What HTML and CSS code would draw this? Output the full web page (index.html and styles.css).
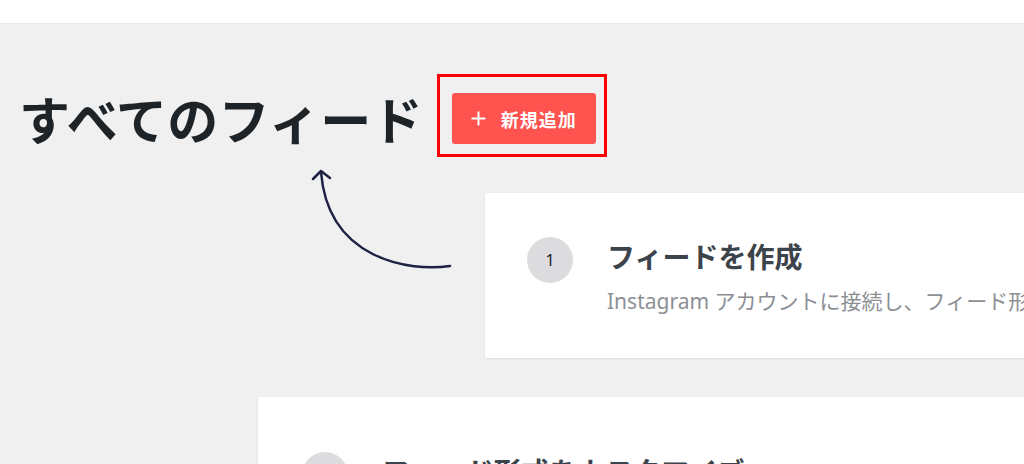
FILE: index.html
```html
<!DOCTYPE html>
<html lang="ja">
<head>
    <meta charset="UTF-8">
    <meta name="viewport" content="width=device-width, initial-scale=1.0">
    <title>すべてのフィード</title>
    <link rel="stylesheet" href="styles.css">
</head>
<body>
    <div class="topbar"></div>

    <div class="page">
        <div class="page-header">
            <h1>すべてのフィード</h1>
            <div class="highlight">
                <button class="add-new">
                    <svg class="plus" width="15" height="15" viewBox="0 0 15 15">
                        <path d="M7.5 0.5V14.5M0.5 7.5H14.5" stroke="#fff" stroke-width="2" fill="none"/>
                    </svg>
                    <span>新規追加</span>
                </button>
            </div>
        </div>

        <div class="step-row first">
            <svg class="arrow" width="185" height="130" viewBox="0 0 185 130">
                <path d="M150 106 C110 112, 28 100, 21 12" stroke="#1d2142" stroke-width="2.5" fill="none" stroke-linecap="round"/>
                <path d="M13 19 L21 11 L30 18" stroke="#1d2142" stroke-width="2.5" fill="none" stroke-linecap="round" stroke-linejoin="round"/>
            </svg>
            <div class="step-card">
                <div class="step-num">1</div>
                <div class="step-text">
                    <h2>フィードを作成</h2>
                    <p>Instagram アカウントに接続し、フィード形式を選択します。</p>
                </div>
            </div>
        </div>

        <div class="step-row second">
            <div class="step-card">
                <div class="step-num">2</div>
                <div class="step-text">
                    <h2>フィード形式をカスタマイズ</h2>
                    <p>レイアウト、色、ヘッダーなどを自由に設定できます。</p>
                </div>
            </div>
        </div>
    </div>
</body>
</html>
```

FILE: styles.css
```css
html, body {
    margin: 0;
    padding: 0;
}
body {
    background: #f0f0f1;
    font-family: "Noto Sans", "Noto Sans CJK JP", sans-serif;
    color: #1d2327;
    overflow: hidden;
    height: 464px;
}
.topbar {
    height: 23px;
    background: #fff;
    border-bottom: 1px solid #ebebeb;
}
.page-header {
    display: flex;
    align-items: flex-start;
    padding: 50px 0 0 19px;
}
.page-header h1 {
    margin: 19px 14px 0 0;
    font-family: "Noto Sans CJK JP", sans-serif;
    font-size: 51px;
    line-height: 50px;
    font-weight: 700;
    color: #1d2327;
    letter-spacing: 0.3px;
}
.highlight {
    border: 3px solid #ff0000;
    padding: 16px 8px 10px 12px;
}
.add-new {
    display: flex;
    align-items: center;
    justify-content: center;
    gap: 15px;
    width: 144px;
    height: 51px;
    padding: 0;
    background: #ff5350;
    border: none;
    border-radius: 3px;
    color: #fff;
    font-family: "Noto Sans CJK JP", sans-serif;
    font-size: 18px;
    font-weight: 700;
    letter-spacing: 1px;
    cursor: pointer;
}
.add-new .plus {
    flex: none;
}
.step-row {
    display: flex;
    align-items: flex-start;
}
.step-row.first {
    margin-top: 3px;
    padding-left: 300px;
}
.step-row.first .step-card {
    margin-top: 33px;
    height: 165px;
    padding: 44px 0 0 42px;
}
.step-row.second {
    margin-top: 39px;
    padding-left: 258px;
}
.step-row.second .step-card {
    height: 200px;
    padding: 55px 0 0 44px;
}
.arrow {
    flex: none;
    display: block;
}
.step-card {
    flex: none;
    width: 780px;
    box-sizing: border-box;
    display: flex;
    align-items: flex-start;
    gap: 34px;
    background: #fff;
    border-radius: 3px;
    box-shadow: 0 1px 3px rgba(0, 0, 0, 0.08);
}
.step-num {
    flex: none;
    width: 46px;
    height: 46px;
    border-radius: 50%;
    background: #dcdcde;
    display: flex;
    align-items: center;
    justify-content: center;
    font-size: 16px;
    color: #1d2327;
}
.step-text h2 {
    margin: 2px 0 0;
    font-family: "Noto Sans CJK JP", sans-serif;
    font-size: 28px;
    line-height: 34px;
    font-weight: 700;
    color: #3c434a;
    white-space: nowrap;
}
.step-text p {
    margin: 14px 0 0;
    font-size: 21px;
    line-height: 28px;
    color: #8c8f94;
    white-space: nowrap;
}
```
